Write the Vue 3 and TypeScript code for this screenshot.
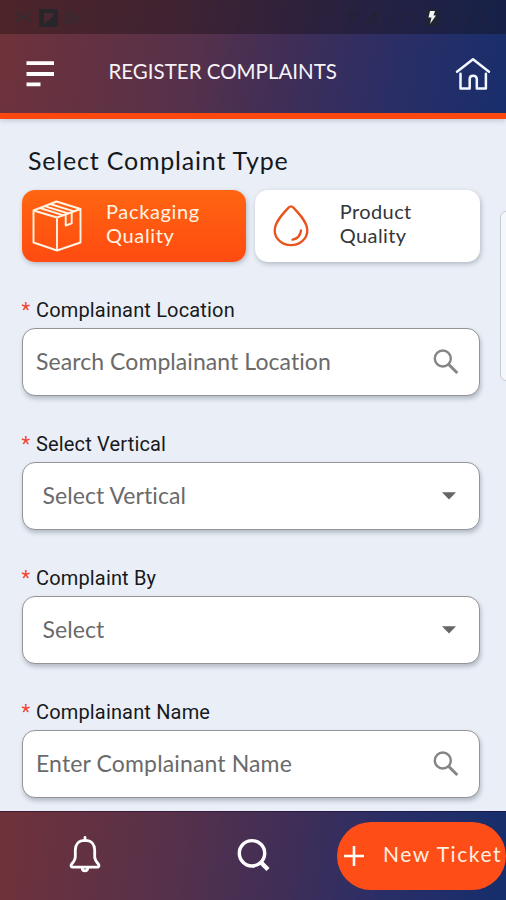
<script setup lang="ts">
import { ref } from 'vue'

interface Field {
  label: string
  placeholder: string
  kind: 'search' | 'select'
  cls: string
}

const active = ref<'packaging' | 'product'>('packaging')

const fields: Field[] = [
  { label: 'Complainant Location', placeholder: 'Search Complainant Location', kind: 'search', cls: 'f-location' },
  { label: 'Select Vertical', placeholder: 'Select Vertical', kind: 'select', cls: 'f-vertical' },
  { label: 'Complaint By', placeholder: 'Select', kind: 'select', cls: 'f-by' },
  { label: 'Complainant Name', placeholder: 'Enter Complainant Name', kind: 'search', cls: 'f-name' },
]
</script>

<template>
  <div class="screen">
    <header class="top">
      <div class="status">
        <svg class="status-left" width="72" height="22" viewBox="0 0 72 22">
          <path d="M2 3l6 5-6 5M17 3l-6 5 6 5M5 8h9" fill="none" stroke="#3a2a30" stroke-width="2.5" />
          <rect x="25" y="-1" width="19" height="19" rx="3" fill="#26262b" />
          <path d="M30 4h9v4l-9 7z" fill="#472831" />
          <path d="M52 4h5v9h-5zM60 4l3 9 4-8" fill="none" stroke="#3c2930" stroke-width="3" />
        </svg>
        <svg class="status-right" width="160" height="22" viewBox="0 0 160 22">
          <path d="M6 4h9l-4 7zM25 13l9-9v9zM51 5v8M60 5v8M72 4v10M115 4v9M127 4v9M141 5v8" fill="none" stroke="#24222f" stroke-width="2" opacity=".6" />
          <rect x="84" y="-1" width="13" height="18" rx="2" fill="#202534" />
          <path d="M88 2h5l-1.500 4.500h2.500l-6 8.500 1.500-6.500h-3z" fill="#f5f5f5" />
        </svg>
      </div>
      <div class="bar">
        <svg class="menu" width="28" height="26" viewBox="0 0 28 26">
          <path d="M.500 2.200h27.500M.500 13h27.500M.500 23.400h14" stroke="#fff" stroke-width="3.800" />
        </svg>
        <h1>REGISTER COMPLAINTS</h1>
        <svg class="home" width="36" height="34" viewBox="0 0 36 34" fill="none" stroke="#f3f7ff" stroke-width="2.500" stroke-linecap="round" stroke-linejoin="round">
          <path d="M2 14.800L18 2.200l16 12.600" />
          <path d="M5.500 16.800v14.800h9.200V22c0-4.300 7.100-4.300 7.100 0v9.600h9.100V16.800" />
        </svg>
      </div>
    </header>

    <main>
      <h2>Select Complaint Type</h2>
      <div class="types">
        <button class="type" :class="{ on: active === 'packaging' }" @click="active = 'packaging'">
          <svg class="box" width="50" height="52" viewBox="0 0 50 52" fill="none" stroke="currentColor" stroke-width="1.900" stroke-linejoin="round">
            <path d="M1.500 10.500L24.500 1.500 48.500 9v33.500L25 50.500 1.500 42.500z" />
            <path d="M1.500 10.500l23.500 7 23.500-8.500M25 17.500v33" />
            <path d="M8 8l23.500 7.300M12.500 6.200l24 7.300M18 4l24 7.300" />
            <path d="M33.700 15v10.500l6-2.200V12.500" />
          </svg>
          <span>Packaging<br />Quality</span>
        </button>
        <button class="type product" :class="{ on: active === 'product' }" @click="active = 'product'">
          <svg class="drop" width="36" height="42" viewBox="0 0 36 42" fill="none" stroke="#e9531c" stroke-width="2.300" stroke-linecap="round">
            <path d="M15.600 2.600Q18 0 20.400 2.600C26 8.500 34.300 17 34.300 25.200c0 8.500-7.300 15-16.300 15s-16.300-6.500-16.300-15C1.700 17 10 8.500 15.600 2.600z" />
            <path d="M28 25.500c-.8 5.200-4 8.500-8.500 9.200" />
          </svg>
          <span>Product<br />Quality</span>
        </button>
      </div>

      <div v-for="f in fields" :key="f.label" class="field" :class="[f.kind, f.cls]">
        <label><b>*</b><span>{{ f.label }}</span></label>
        <div class="input">
          <span class="ph">{{ f.placeholder }}</span>
          <svg v-if="f.kind === 'search'" class="glass" width="26" height="26" viewBox="0 0 26 26" fill="none" stroke="#858585">
            <circle cx="9.800" cy="9.500" r="8" stroke-width="2.400" />
            <path d="M15.500 15.300l8.800 8.700" stroke-width="3" />
          </svg>
          <svg v-else class="caret" width="14" height="8" viewBox="0 0 14 8">
            <path d="M0 .3h14L7 7.500z" fill="#666" />
          </svg>
        </div>
      </div>
      <div class="handle"></div>
    </main>

    <footer>
      <svg class="bell" width="32" height="38" viewBox="0 0 32 38" fill="none" stroke="#fff" stroke-width="2.800" stroke-linejoin="round" stroke-linecap="round">
        <path d="M16 2.500v3M16 5.300C9.500 5.300 6.300 9.500 6.300 15v7c0 3-1.300 4.500-3.600 7-1.300 1.600-.6 3.200 1.200 3.200h24.200c1.800 0 2.500-1.600 1.200-3.200-2.300-2.500-3.600-4-3.600-7v-7c0-5.500-3.200-9.700-9.700-9.700z" />
        <path d="M13.200 33c0 3.800 5.600 3.800 5.600 0" />
      </svg>
      <svg class="find" width="34" height="34" viewBox="0 0 34 34" fill="none" stroke="#fff">
        <circle cx="15" cy="15.300" r="12.700" stroke-width="3.400" />
        <path d="M23.500 24l7.500 7.500" stroke-width="4.400" />
      </svg>
      <button class="ticket">
        <svg width="20" height="20" viewBox="0 0 20 20"><path d="M10 0v20M0 10h20" stroke="#fff" stroke-width="2.600" /></svg>
        <span>New Ticket</span>
      </button>
    </footer>
  </div>
</template>

<style>
body {
  margin: 0;
}
</style>

<style scoped>
* {
  box-sizing: border-box;
}
.screen {
  width: 506px;
  height: 900px;
  display: flex;
  flex-direction: column;
  overflow: hidden;
  background: #eaeff7;
  font-family: Lato, "Open Sans", sans-serif;
}
svg {
  display: block;
  flex: none;
}
.top {
  flex: none;
  height: 118.500px;
  border-bottom: 6px solid #fc480f;
  background: linear-gradient(100deg, #70323a 0%, #57314a 37%, #3e2e58 58%, #2b2e66 77%, #182e6c 100%);
  box-shadow: 0 2px 5px rgba(80, 100, 120, 0.25);
}
.status {
  height: 34px;
  padding: 9px 0 0 14px;
  display: flex;
  background: rgba(18, 10, 12, 0.36);
}
.status-right {
  margin-left: 256px;
}
.bar {
  height: 79px;
  display: flex;
  align-items: center;
  padding: 0 15px 0 26px;
}
h1 {
  margin: -5px 0 0 54.500px;
  font-size: 20.5px;
  line-height: 26px;
  font-weight: 400;
  color: #f8f3f8;
  white-space: nowrap;
}
.home {
  margin: 1px 0 0 auto;
}
main {
  flex: none;
  height: 692.500px;
  padding: 26.500px 26px 0 21.500px;
  position: relative;
}
h2 {
  margin: 0 0 0 6.500px;
  height: 45px;
  font-size: 25px;
  line-height: 31px;
  font-weight: 400;
  letter-spacing: 0.8px;
  color: #15181c;
  white-space: nowrap;
}
.types {
  display: flex;
  gap: 9px;
}
.type {
  flex: 1;
  height: 72px;
  padding: 0;
  border: 0;
  border-radius: 13px;
  display: flex;
  align-items: center;
  background: #fff;
  color: #33363a;
  font: 400 20px/24px Lato, sans-serif;
  letter-spacing: 0.650px;
  text-align: left;
  box-shadow: 1px 2px 5px rgba(70, 80, 95, 0.35);
}
.type.on {
  color: #fff3e4;
  background: linear-gradient(#ff6511, #ff4b11);
}
.type span {
  margin-top: -6px;
}
.type.product {
  letter-spacing: 0.4px;
}
.box {
  margin: 0 24.500px 0 10px;
}
.drop {
  margin: 0 30.500px 0 18px;
}
.field {
  height: 94px;
}
.field label {
  display: flex;
  gap: 5px;
  height: 26px;
  font: 400 20px/17px Roboto, sans-serif;
  letter-spacing: 0.160px;
  color: #17191c;
  white-space: nowrap;
}
.field label b {
  width: 9.500px;
  font-weight: 400;
  color: #f4422f;
}
.f-location {
  margin-top: 40px;
}
.field + .field {
  margin-top: 40.100px;
}
.input {
  height: 67.500px;
  border: 1.500px solid #929498;
  border-radius: 13px;
  background: #fff;
  display: flex;
  align-items: center;
  justify-content: space-between;
  padding: 0 20.500px 0 13.500px;
  box-shadow: 1px 3px 4px rgba(70, 80, 95, 0.32);
}
.ph {
  margin-top: -2px;
  font-size: 23px;
  line-height: 28px;
  letter-spacing: 0.070px;
  color: #6a6a6a;
  white-space: nowrap;
}
.f-name .ph {
  letter-spacing: 0.140px;
}
.select .input {
  padding: 0 23.500px 0 20px;
}
.handle {
  position: absolute;
  right: -6px;
  top: 92.500px;
  width: 12px;
  height: 170px;
  border: 1px solid #c6cad1;
  border-radius: 6px;
  background: #f5f7fb;
}
footer {
  flex: none;
  height: 89px;
  display: flex;
  align-items: center;
  border-top: 1px solid rgba(20, 0, 40, 0.45);
  background: linear-gradient(98deg, #70323a 0%, #57314a 33%, #3e2e58 58%, #2b2e66 75%, #152e6c 100%);
}
.bell {
  margin: -5px 0 0 69px;
}
.find {
  margin: -3px 0 0 136px;
}
.ticket {
  margin: -1px 0 0 66px;
  flex: none;
  width: 169px;
  height: 68px;
  padding: 0 0 0 7px;
  border: 0;
  border-radius: 34px;
  display: flex;
  align-items: center;
  gap: 19px;
  background: #ff4d17;
  color: #fff0e0;
  font: 400 21px/26px Lato, sans-serif;
  letter-spacing: 1.550px;
  white-space: nowrap;
}
.ticket span {
  margin-top: -3px;
}
</style>
